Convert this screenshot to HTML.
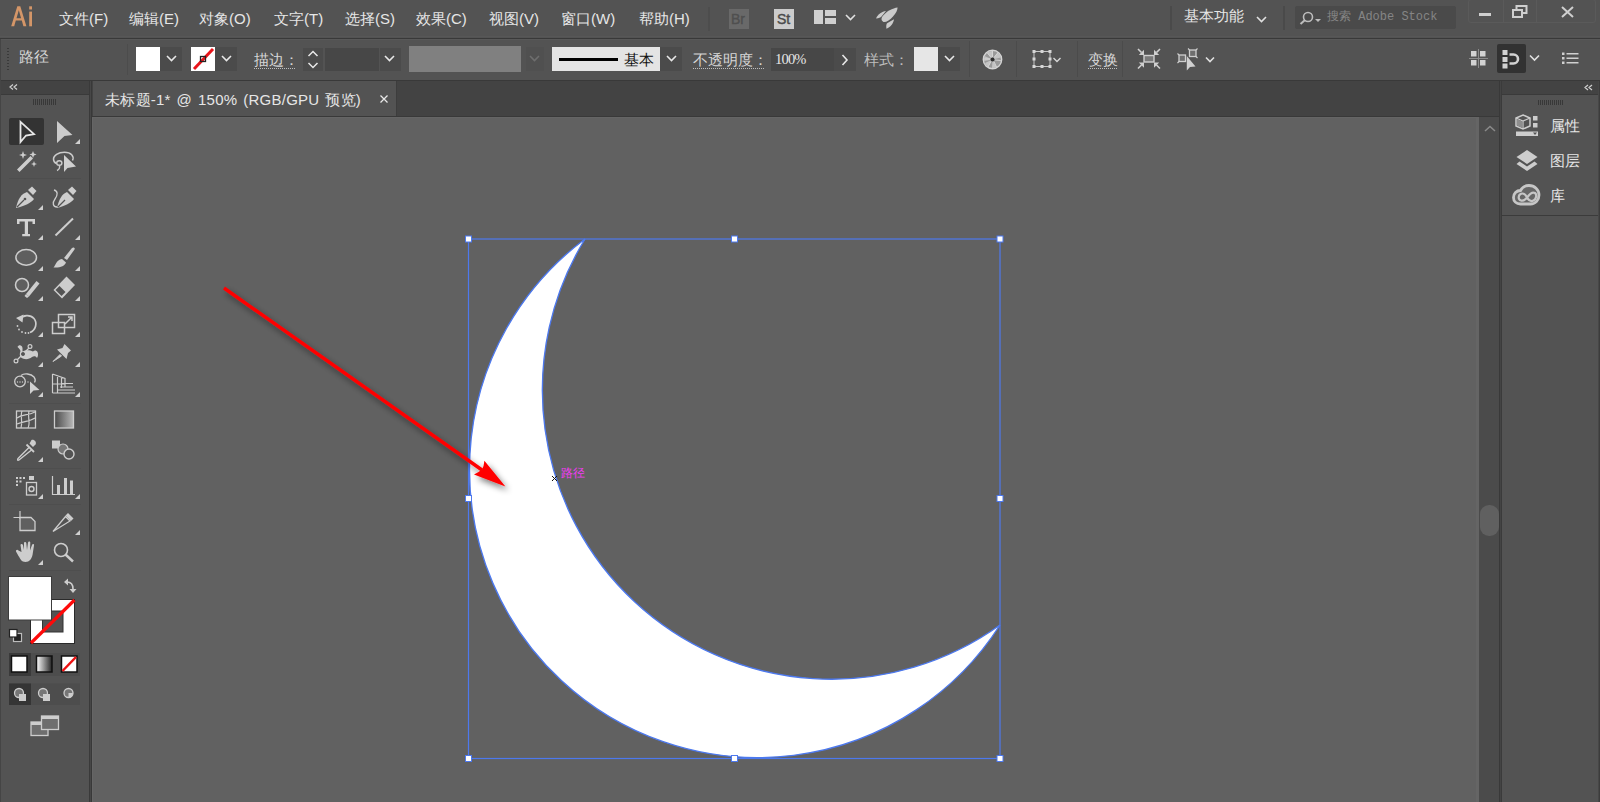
<!DOCTYPE html>
<html><head><meta charset="utf-8">
<style>
*{box-sizing:border-box;margin:0;padding:0}
html,body{width:1600px;height:802px;overflow:hidden;background:#535353;font-family:"Liberation Sans",sans-serif;color:#e0e0e0}
.a{position:absolute}
.t{position:absolute;white-space:nowrap;line-height:1}
.menu{font-size:15px;color:#e6e6e6;top:11px}
.ctl{font-size:15px;color:#d6d6d6;font-family:"Liberation Serif",serif}
.dd{position:absolute;background:#4b4b4b}
.chev{position:absolute}
.sep{position:absolute;width:1px;background:#484848}
.tri{position:absolute;width:0;height:0;border-left:5px solid transparent;border-bottom:5px solid #cfcfcf}
</style></head><body>
<!-- MENU BAR -->
<div class="a" style="left:0;top:0;width:1600px;height:37px;background:#535353"></div>
<div class="a" style="left:0;top:36px;width:1600px;height:1px;background:#575757"></div>
<div class="a" style="left:0;top:38px;width:1600px;height:1px;background:#393939"></div>
<svg class="a" style="left:0;top:0" width="40" height="36"><g fill="#d49668"><path d="M11.2 26.3 L17.3 6.2 L20.3 6.2 L26.4 26.3 L23.4 26.3 L21.8 20.6 L15.8 20.6 L14.2 26.3 Z M16.5 18.2 L21.1 18.2 L18.8 10.3 Z" fill-rule="evenodd"/><rect x="29.2" y="11.6" width="2.8" height="14.7"/><rect x="29.2" y="6.3" width="2.8" height="3.2"/></g></svg>
<div class="t menu" style="left:59px">文件(F)</div>
<div class="t menu" style="left:129px">编辑(E)</div>
<div class="t menu" style="left:199px">对象(O)</div>
<div class="t menu" style="left:274px">文字(T)</div>
<div class="t menu" style="left:345px">选择(S)</div>
<div class="t menu" style="left:416px">效果(C)</div>
<div class="t menu" style="left:489px">视图(V)</div>
<div class="t menu" style="left:561px">窗口(W)</div>
<div class="t menu" style="left:639px">帮助(H)</div>
<div class="sep" style="left:708px;top:7px;height:24px;width:2px;background:#4d4d4d"></div>


<div class="a" style="left:729px;top:9px;width:20px;height:20px;background:#696969"></div>
<div class="t" style="left:731px;top:12px;font-size:14px;color:#4f4f4f;-webkit-text-stroke:0.4px #4f4f4f">Br</div>
<div class="a" style="left:774px;top:9px;width:20px;height:20px;background:#cccccc"></div>
<div class="t" style="left:777px;top:12px;font-size:14px;color:#4a4a4a;-webkit-text-stroke:0.4px #4a4a4a">St</div>
<svg class="a" style="left:814px;top:10px" width="22" height="14"><rect x="0" y="0" width="9" height="14" fill="#cfcfcf"/><rect x="11" y="0" width="11" height="6" fill="#cfcfcf"/><rect x="11" y="8" width="11" height="6" fill="#cfcfcf"/></svg>
<svg class="a" style="left:845px;top:14px" width="11" height="7"><path d="M1 1 L5.5 5.5 L10 1" fill="none" stroke="#e0e0e0" stroke-width="1.6"/></svg>
<svg class="a" style="left:870px;top:2px" width="34" height="32"><g fill="#cbcbcb"><path d="M27.6 5.4 C23 6 16 9 12 15 C11 17 11.5 19 13.5 20 C16 20.5 20 18 23 14.5 C26 11 27.5 8 27.6 5.4 Z"/><path d="M6 16.4 C8 12 12 9.5 16 9 L11.5 14.5 C10.5 15.7 9 16.3 6 16.4 Z"/><path d="M16.4 26.8 C16 23 16.5 21.5 17.5 21 L24 17.2 C23.5 21 21 25 16.4 26.8 Z"/></g></svg>
<div class="a" style="left:1170px;top:6px;width:2px;height:24px;background:#4a4a4a"></div>
<div class="t menu" style="left:1184px;top:8px">基本功能</div>
<svg class="a" style="left:1256px;top:16px" width="11" height="7"><path d="M1 1 L5.5 5.5 L10 1" fill="none" stroke="#e0e0e0" stroke-width="1.6"/></svg>
<div class="a" style="left:1283px;top:6px;width:2px;height:24px;background:#4a4a4a"></div>
<div class="a" style="left:1295px;top:6px;width:161px;height:23px;background:#4a4a4a;border-radius:2px"></div>
<svg class="a" style="left:1299px;top:11px" width="24" height="14"><circle cx="9" cy="6" r="4.5" fill="none" stroke="#bdbdbd" stroke-width="1.6"/><path d="M6 9 L1.5 13" stroke="#bdbdbd" stroke-width="2"/><path d="M16 8 L22 8 L19 11 Z" fill="#bdbdbd"/></svg>
<div class="t" style="left:1327px;top:11px;font-size:12px;color:#858585;font-family:'Liberation Mono',monospace">搜索 Adobe Stock</div>
<div class="a" style="left:1468px;top:-1px;width:128px;height:24px;border:1px solid #5a5a5a;border-radius:3px"></div>
<div class="a" style="left:1503px;top:0;width:1px;height:23px;background:#5a5a5a"></div>
<div class="a" style="left:1536px;top:0;width:1px;height:23px;background:#5a5a5a"></div>
<div class="a" style="left:1479px;top:13px;width:12px;height:3px;background:#cfcfcf"></div>
<svg class="a" style="left:1512px;top:5px" width="16" height="13"><rect x="4.5" y="1" width="10" height="7" fill="none" stroke="#cfcfcf" stroke-width="2"/><rect x="1" y="5" width="9" height="7" fill="#535353" stroke="#cfcfcf" stroke-width="2"/></svg>
<svg class="a" style="left:1561px;top:6px" width="13" height="12"><path d="M1 1 L12 11 M12 1 L1 11" stroke="#cfcfcf" stroke-width="2"/></svg>

<!-- CONTROL BAR -->
<div class="a" style="left:0;top:39px;width:1600px;height:41px;background:#535353"></div>
<div class="a" style="left:0;top:39px;width:1600px;height:1px;background:#585858"></div>
<div class="a" style="left:0;top:80px;width:1600px;height:1px;background:#393939"></div>


<!-- control bar content -->
<div class="a" style="left:7px;top:48px;width:2px;height:23px;background:repeating-linear-gradient(#3a3a3a 0 1px,transparent 1px 3px)"></div>
<div class="t ctl" style="left:19px;top:50px;font-size:15px">路径</div>
<div class="a" style="left:127px;top:44px;width:1px;height:31px;background:#4c4c4c"></div>
<div class="a" style="left:136px;top:47px;width:24px;height:24px;background:#fff"></div>
<div class="dd" style="left:160px;top:47px;width:22px;height:24px"></div>
<svg class="a" style="left:166px;top:55px" width="11" height="7"><path d="M1 1 L5.5 5.5 L10 1" fill="none" stroke="#e8e8e8" stroke-width="1.6"/></svg>
<div class="a" style="left:191px;top:47px;width:24px;height:24px;background:#fff"></div>
<svg class="a" style="left:191px;top:47px" width="24" height="24"><line x1="3" y1="22" x2="22" y2="2" stroke="#e8141a" stroke-width="3"/><rect x="9.5" y="9.5" width="5" height="5" fill="none" stroke="#222" stroke-width="1.3"/></svg>
<div class="dd" style="left:215px;top:47px;width:22px;height:24px"></div>
<svg class="a" style="left:221px;top:55px" width="11" height="7"><path d="M1 1 L5.5 5.5 L10 1" fill="none" stroke="#e8e8e8" stroke-width="1.6"/></svg>
<div class="t ctl" style="left:254px;top:53px">描边：</div>
<div class="a" style="left:254px;top:68px;width:41px;height:1px;background:repeating-linear-gradient(90deg,#bdbdbd 0 1px,transparent 1px 2px)"></div>
<div class="dd" style="left:303px;top:48px;width:20px;height:23px"></div>
<svg class="a" style="left:307px;top:50px" width="12" height="20"><path d="M1.5 6 L6 1.5 L10.5 6 M1.5 13 L6 17.5 L10.5 13" fill="none" stroke="#e8e8e8" stroke-width="1.5"/></svg>
<div class="a" style="left:325px;top:48px;width:54px;height:23px;background:#474747"></div>
<div class="dd" style="left:380px;top:48px;width:21px;height:23px"></div>
<svg class="a" style="left:384px;top:55px" width="11" height="7"><path d="M1 1 L5.5 5.5 L10 1" fill="none" stroke="#e8e8e8" stroke-width="1.6"/></svg>
<div class="a" style="left:409px;top:46px;width:112px;height:26px;background:#808080"></div>
<div class="a" style="left:526px;top:47px;width:18px;height:24px;background:#505050"></div>
<svg class="a" style="left:529px;top:55px" width="11" height="7"><path d="M1 1 L5.5 5.5 L10 1" fill="none" stroke="#6e6e6e" stroke-width="1.6"/></svg>
<div class="a" style="left:552px;top:47px;width:108px;height:24px;background:#e4e4e4"></div>
<div class="a" style="left:559px;top:58px;width:59px;height:3px;background:#000"></div>
<div class="t ctl" style="left:624px;top:53px;color:#111;font-size:14.5px">基本</div>
<div class="dd" style="left:660px;top:47px;width:22px;height:24px"></div>
<svg class="a" style="left:666px;top:55px" width="11" height="7"><path d="M1 1 L5.5 5.5 L10 1" fill="none" stroke="#e8e8e8" stroke-width="1.6"/></svg>
<div class="t ctl" style="left:693px;top:53px">不透明度：</div>
<div class="a" style="left:693px;top:68px;width:71px;height:1px;background:repeating-linear-gradient(90deg,#bdbdbd 0 1px,transparent 1px 2px)"></div>
<div class="a" style="left:771px;top:48px;width:63px;height:23px;background:#474747"></div>
<div class="t ctl" style="left:775px;top:52px;font-size:14.5px;color:#e6e6e6;letter-spacing:-0.8px">100%</div>
<div class="dd" style="left:834px;top:48px;width:22px;height:23px"></div>
<svg class="a" style="left:841px;top:54px" width="8" height="12"><path d="M1.5 1 L6 6 L1.5 11" fill="none" stroke="#e8e8e8" stroke-width="1.6"/></svg>
<div class="t ctl" style="left:864px;top:53px;color:#bdbdbd">样式：</div>
<div class="a" style="left:914px;top:47px;width:24px;height:24px;background:#e6e6e6"></div>
<div class="dd" style="left:938px;top:47px;width:22px;height:24px"></div>
<svg class="a" style="left:944px;top:55px" width="11" height="7"><path d="M1 1 L5.5 5.5 L10 1" fill="none" stroke="#e8e8e8" stroke-width="1.6"/></svg>
<div class="a" style="left:969px;top:41px;width:1px;height:36px;background:#4b4b4b"></div>
<svg class="a" style="left:982px;top:49px" width="21" height="21"><circle cx="10.5" cy="10.5" r="9.2" fill="#9a9a9a" stroke="#d4d4d4" stroke-width="1.4"/><path d="M10.5 10.5 L5 3.5 A8.5 8.5 0 0 1 10.5 2 Z M10.5 10.5 L16 3.5 A8.5 8.5 0 0 1 18.8 8.5 Z M10.5 10.5 L2.2 12 A8.5 8.5 0 0 1 2.5 7 Z M10.5 10.5 L6 18 A8.5 8.5 0 0 1 3 14 Z M10.5 10.5 L14.5 18 A8.5 8.5 0 0 1 10 19 Z" fill="#c4c4c4"/><path d="M10.5 2 V8 M16 3.5 L12 8.5 M18.8 11.5 L13 11 M14.5 18 L12 12.5 M6 18 L9 12.5 M2.2 10 L8 10 M5 3.5 L9 8.5" stroke="#d8d8d8" stroke-width="0.9"/><circle cx="10.5" cy="10.5" r="2" fill="#2e2e2e"/></svg>
<div class="a" style="left:1016px;top:41px;width:1px;height:36px;background:#4b4b4b"></div>
<svg class="a" style="left:1031px;top:49px" width="32" height="20"><rect x="3" y="2.5" width="16" height="15" fill="none" stroke="#c8c8c8" stroke-width="1"/><g fill="#d6d6d6"><rect x="1.5" y="1" width="3" height="3"/><rect x="9.5" y="1" width="3" height="3"/><rect x="17.5" y="1" width="3" height="3"/><rect x="1.5" y="8.5" width="3" height="3"/><rect x="17.5" y="8.5" width="3" height="3"/><rect x="1.5" y="16" width="3" height="3"/><rect x="9.5" y="16" width="3" height="3"/><rect x="17.5" y="16" width="3" height="3"/></g><path d="M22.5 9 L26 12.5 L29.5 9" fill="none" stroke="#d6d6d6" stroke-width="1.4"/></svg>
<div class="a" style="left:1077px;top:41px;width:1px;height:36px;background:#4b4b4b"></div>
<div class="t ctl" style="left:1088px;top:53px">变换</div>
<div class="a" style="left:1088px;top:68px;width:29px;height:1px;background:repeating-linear-gradient(90deg,#bdbdbd 0 1px,transparent 1px 2px)"></div>
<div class="a" style="left:1122px;top:41px;width:1px;height:36px;background:#4b4b4b"></div>
<svg class="a" style="left:1137px;top:48px" width="24" height="22"><rect x="7" y="7.5" width="10" height="6.5" fill="#7a7a7a" stroke="#d0d0d0" stroke-width="1.4"/><g fill="#d0d0d0"><path d="M7 7 L7 1.8 L1.8 7 Z"/><path d="M17 7 L17 1.8 L22.2 7 Z"/><path d="M7 14.5 L7 19.7 L1.8 14.5 Z"/><path d="M17 14.5 L17 19.7 L22.2 14.5 Z"/></g><path d="M1 1 L4.5 4.5 M23 1 L19.5 4.5 M1 20.5 L4.5 17 M23 20.5 L19.5 17" stroke="#d0d0d0" stroke-width="1.6"/></svg>
<svg class="a" style="left:1177px;top:48px" width="40" height="24"><rect x="2" y="7" width="6.5" height="6.5" fill="#6e6e6e" stroke="#cfcfcf" stroke-width="1.3"/><rect x="12.5" y="2" width="6.5" height="6.5" fill="#6e6e6e" stroke="#cfcfcf" stroke-width="1.3"/><path d="M0.5 5.5 L2 7 M0.5 15 L2 13.5 M11 0.5 L12.5 2 M20.5 0.5 L19 2 M20.5 10 L19 8.5" stroke="#cfcfcf" stroke-width="1.1"/><path d="M9.8 8 L9.8 22.5 L13 19 L18.5 18.5 Z" fill="#d0d0d0"/><path d="M29 9.5 L33 13.5 L37 9.5" fill="none" stroke="#e0e0e0" stroke-width="1.6"/></svg>
<svg class="a" style="left:1468px;top:48px" width="21" height="21"><path d="M1 10.5 H20 M10.5 1 V20" stroke="#8a8a8a" stroke-width="1"/><g fill="#d2d2d2"><rect x="3" y="3" width="5.5" height="5.5"/><rect x="12" y="3" width="5.5" height="5.5"/><rect x="3" y="12" width="5.5" height="5.5"/><rect x="12" y="12" width="5.5" height="5.5"/></g></svg>
<div class="a" style="left:1497px;top:44px;width:29px;height:29px;background:#323232;border-radius:2px"></div>
<svg class="a" style="left:1500px;top:48px" width="22" height="22"><g fill="#d2d2d2"><rect x="2.5" y="2" width="5" height="5"/><rect x="2.5" y="9" width="5" height="5"/><rect x="2.5" y="15.5" width="5" height="5"/></g><path d="M9.5 6.5 H13.5 A4.5 4.5 0 0 1 13.5 15.5 H9.5" fill="none" stroke="#d2d2d2" stroke-width="2.6"/></svg>
<svg class="a" style="left:1529px;top:54px" width="11" height="8"><path d="M1 1.5 L5.5 6 L10 1.5" fill="none" stroke="#e0e0e0" stroke-width="1.6"/></svg>
<svg class="a" style="left:1562px;top:52px" width="17" height="13"><rect x="0" y="0.5" width="2.5" height="2.5" fill="#d0d0d0"/><rect x="0" y="5" width="2.5" height="2.5" fill="#d0d0d0"/><rect x="0" y="9.5" width="2.5" height="2.5" fill="#d0d0d0"/><rect x="4.5" y="1" width="12" height="1.5" fill="#d0d0d0"/><rect x="4.5" y="5.5" width="12" height="1.5" fill="#d0d0d0"/><rect x="4.5" y="10" width="12" height="1.5" fill="#d0d0d0"/></svg>

<!-- TAB BAR + PANELS -->
<div class="a" style="left:0;top:81px;width:1600px;height:37px;background:#434343"></div>
<!-- left tool panel -->
<div class="a" style="left:0;top:39px;width:1px;height:763px;background:#454545;z-index:1"></div>
<div class="a" style="left:0;top:81px;width:90px;height:721px;background:#535353"></div>
<div class="a" style="left:0;top:81px;width:90px;height:14px;background:#434343"></div>
<div class="a" style="left:0;top:94px;width:90px;height:1px;background:#3a3a3a"></div>
<div class="a" style="left:89px;top:81px;width:3px;height:721px;background:linear-gradient(90deg,#3a3a3a 0 1px,#474747 1px 2px,#393939 2px 3px)"></div>
<!-- doc tab -->
<div class="a" style="left:93px;top:81px;width:303px;height:35px;background:#535353"></div>
<div class="t" style="left:105px;top:92px;font-size:15px;color:#e6e6e6;letter-spacing:0.25px;word-spacing:1.5px">未标题-1* @ 150% (RGB/GPU 预览)</div>
<svg class="a" style="left:379px;top:94px" width="10" height="10"><path d="M1.5 1.5 L8.5 8.5 M8.5 1.5 L1.5 8.5" stroke="#e8e8e8" stroke-width="1.3"/></svg>
<!-- canvas -->
<div class="a" style="left:92px;top:117px;width:1387px;height:685px;background:#616161"></div>
<div class="a" style="left:92px;top:117px;width:1px;height:685px;background:#666"></div>
<div class="a" style="left:92px;top:116px;width:1407px;height:1px;background:#393939"></div>
<div class="a" style="left:92px;top:117px;width:1387px;height:1px;background:#656565"></div>
<div class="a" style="left:396px;top:81px;width:1px;height:35px;background:#3d3d3d"></div>
<div class="a" style="left:1476px;top:117px;width:3px;height:685px;background:#656565"></div>
<!-- scrollbar -->
<div class="a" style="left:1479px;top:117px;width:20px;height:685px;background:#4b4b4b"></div>
<div class="a" style="left:1480px;top:505px;width:19px;height:31px;background:#606060;border-radius:9px"></div>
<div class="a" style="left:1499px;top:81px;width:3px;height:721px;background:linear-gradient(90deg,#393939 0 1px,#444 1px 2px,#3b3b3b 2px 3px)"></div>
<!-- right panel -->
<div class="a" style="left:1502px;top:81px;width:98px;height:721px;background:#535353"></div>
<div class="a" style="left:1502px;top:81px;width:98px;height:14px;background:#434343"></div>
<div class="a" style="left:1502px;top:94px;width:98px;height:1px;background:#3a3a3a"></div>
<div class="a" style="left:1502px;top:215px;width:98px;height:1px;background:#3b3b3b"></div>
<div class="a" style="left:1598px;top:81px;width:2px;height:721px;background:linear-gradient(90deg,#474747 0 1px,#3c3c3c 1px 2px)"></div>


<!-- LEFT TOOLS -->
<svg class="a" style="left:0;top:0" width="92" height="802">
<g fill="none" stroke="#3f3f3f"><path d="M13 84.5 L10 87 L13 89.5 M17 84.5 L14 87 L17 89.5" stroke="#d0d0d0" stroke-width="1.2"/></g>
<g fill="#383838"><rect x="33" y="99" width="1" height="6"/><rect x="35" y="99" width="1" height="6"/><rect x="37" y="99" width="1" height="6"/><rect x="39" y="99" width="1" height="6"/><rect x="41" y="99" width="1" height="6"/><rect x="43" y="99" width="1" height="6"/><rect x="45" y="99" width="1" height="6"/><rect x="47" y="99" width="1" height="6"/><rect x="49" y="99" width="1" height="6"/><rect x="51" y="99" width="1" height="6"/><rect x="53" y="99" width="1" height="6"/><rect x="55" y="99" width="1" height="6"/></g>
<rect x="9" y="118" width="35" height="27" rx="2" fill="#333"/>
<path d="M20.5 121.8 L34 134.2 L26 135.5 L20.5 142 Z" fill="none" stroke="#e6e6e6" stroke-width="1.8" stroke-linejoin="miter"/>
<path d="M57 121 L72.5 135 L64.5 136 L57 143 Z" fill="#cbcbcb"/>
<g fill="#cfcfcf">
<path d="M80 139 L80 144 L75 144 Z"/>
<path d="M43 205 L43 210 L38 210 Z"/>
<path d="M43 235 L43 240 L38 240 Z"/><path d="M80 235 L80 240 L75 240 Z"/>
<path d="M43 266 L43 271 L38 271 Z"/><path d="M80 266 L80 271 L75 271 Z"/>
<path d="M43 296 L43 301 L38 301 Z"/><path d="M80 296 L80 301 L75 301 Z"/>
<path d="M43 332 L43 337 L38 337 Z"/><path d="M80 332 L80 337 L75 337 Z"/>
<path d="M43 362 L43 367 L38 367 Z"/><path d="M80 362 L80 367 L75 367 Z"/>
<path d="M43 392 L43 397 L38 397 Z"/><path d="M80 392 L80 397 L75 397 Z"/>
<path d="M43 457 L43 462 L38 462 Z"/>
<path d="M43 494 L43 499 L38 499 Z"/><path d="M80 494 L80 499 L75 499 Z"/>
<path d="M80 530 L80 535 L75 535 Z"/>
<path d="M43 560 L43 565 L38 565 Z"/>
</g>
<g stroke="#4e4e4e" stroke-width="1"><path d="M9 178.5 H81 M9 403.5 H81 M9 468.5 H81 M9 504.5 H81 M9 570.5 H81"/></g>
<!-- wand -->
<g fill="#cdcdcd"><path d="M17 169.5 L30.5 156 L33 158.5 L19.5 172 Z"/>
<path d="M23 151 L24 154 L27 155 L24 156 L23 159 L22 156 L19 155 L22 154 Z"/>
<path d="M33 151 L34 153.5 L36.5 154.5 L34 155.5 L33 158 L32 155.5 L29.5 154.5 L32 153.5 Z"/>
<path d="M34 161 L34.8 163.2 L37 164 L34.8 164.8 L34 167 L33.2 164.8 L31 164 L33.2 163.2 Z"/></g>
<!-- lasso -->
<path d="M72.5 160.5 C74.5 156 71 152.3 64.5 152.3 C58 152.3 53.5 155.5 53.5 159 C53.5 161.5 55 163 56.5 163.5" fill="none" stroke="#cdcdcd" stroke-width="1.5"/>
<ellipse cx="59.3" cy="163" rx="2.6" ry="2.2" fill="none" stroke="#cdcdcd" stroke-width="1.4"/>
<path d="M59.5 165.5 C60 168 59.5 169.5 57 170.5" fill="none" stroke="#cdcdcd" stroke-width="1.4"/>
<path d="M64 155 L76 166.5 L67.5 168 L64 172 Z" fill="#d0d0d0"/>
<!-- pen -->
<g fill="#cdcdcd"><path d="M28 190 L32 186.5 L36.5 191 L33 195 Z"/><path d="M27 192 L34 199 C31 203 25 206 16 208 C18 199 21 194 27 192 Z"/></g>
<path d="M17 207 L24 200" stroke="#535353" stroke-width="1.2"/><circle cx="25" cy="199" r="1.3" fill="#535353"/>
<!-- curvature pen -->
<g fill="#cdcdcd"><path d="M68 190 L72 186.5 L76.5 191 L73 195 Z"/><path d="M67 192 L74 199 C71 203 65 206 57 208 C59 199 62 194 67 192 Z"/></g>
<path d="M58 207 L65 200" stroke="#535353" stroke-width="1.2"/>
<path d="M54 190 C58 191 58 195 55 199 C52 203 53 207 57 207" fill="none" stroke="#cdcdcd" stroke-width="1.3"/>
<!-- T -->
<path d="M17 219 H35 V224 H32.5 V221.5 H28 V234 H30 V236.2 H22.2 V234 H24.8 V221.5 H19.5 V224 H17 Z" fill="#d2d2d2"/>
<!-- line -->
<path d="M55.5 235.5 L73 218.5" stroke="#cdcdcd" stroke-width="2"/>
<!-- ellipse -->
<ellipse cx="26.2" cy="257.4" rx="10.3" ry="7.8" fill="#5f5f5f" stroke="#cdcdcd" stroke-width="1.5"/>
<!-- brush -->
<g fill="#cdcdcd"><path d="M64 258 L72 248 C73.5 246.5 75.5 248 74.5 249.5 L67 260 Z"/><path d="M62 259 L66 262.5 C65 266 60 268 53.5 267.5 C56 265 56 260 62 259 Z"/></g>
<!-- shaper -->
<circle cx="22" cy="285" r="6.5" fill="#5f5f5f" stroke="#cdcdcd" stroke-width="1.5"/>
<g fill="#cdcdcd"><path d="M26 294 L36.5 281 L39.5 283.5 L29 296.5 Z"/><path d="M24.5 296 L26 294 L29 296.5 L27 298 Z"/></g>
<!-- eraser -->
<path d="M53.5 290 L66.5 276.5 L75 285 L62 298.5 Z" fill="#cdcdcd"/>
<path d="M55.5 290 L59.5 286 L65.5 292 L61.5 296 Z" fill="#535353"/>
<!-- rotate -->
<path d="M20 319 C23 315 30 314 34 318.5 C37.5 323 36 330 30 332.5" fill="none" stroke="#cdcdcd" stroke-width="1.7"/>
<path d="M16 318 L23.5 314.5 L22.5 322.5 Z" fill="#cdcdcd"/>
<g fill="#cdcdcd"><circle cx="17.5" cy="326" r="0.9"/><circle cx="19" cy="329.5" r="0.9"/><circle cx="22" cy="332" r="0.9"/><circle cx="25.5" cy="333" r="0.9"/><circle cx="28.5" cy="333" r="0.9"/></g>
<!-- scale -->
<g fill="none" stroke="#cdcdcd" stroke-width="1.5"><rect x="58.5" y="314.5" width="16" height="13"/><rect x="52.5" y="322.5" width="12" height="11"/><path d="M65 324 L72 317 M68 317 L72 317 L72 321"/></g>
<!-- puppet / width -->
<path d="M17.5 347 C18.5 344.5 22 344.5 22.5 348 L22.5 351.5 C26 349.5 30 350 33 351.5 C34.5 350 36.5 350 37.5 352 C38.5 354 38 356.5 37 358 C36 356 34 355.5 32 357 C29 359.5 24.5 360 21 357.5 C19.5 356 19.5 353 20.5 351 C20 349 18.5 348 17.5 347 Z" fill="#cdcdcd"/>
<path d="M16 361 L30 347" stroke="#cdcdcd" stroke-width="1.3"/>
<circle cx="16" cy="361" r="1.9" fill="#535353" stroke="#cdcdcd" stroke-width="1.2"/><circle cx="30" cy="346.5" r="1.9" fill="#535353" stroke="#cdcdcd" stroke-width="1.2"/><circle cx="23" cy="354" r="1.6" fill="#535353" stroke="#535353" stroke-width="0.8"/>
<!-- pin -->
<path d="M64.5 344 L71 350.5 L68 353 L66.5 359 L57 349.5 L62.5 348 Z" fill="#cdcdcd"/>
<path d="M53 361.5 L60 354.5 L61.5 356 Z" fill="#cdcdcd" stroke="#cdcdcd" stroke-width="1"/>
<!-- shape builder -->
<circle cx="20" cy="381.5" r="5.3" fill="none" stroke="#cdcdcd" stroke-width="1.3"/><path d="M21 375.5 C24 373 31 373.5 34 377 C35.5 379 35.5 381 34.5 382.5" fill="none" stroke="#cdcdcd" stroke-width="1.3"/>
<g fill="#cdcdcd"><circle cx="17.5" cy="382" r="0.7"/><circle cx="20" cy="382" r="0.7"/><circle cx="22.5" cy="382" r="0.7"/><circle cx="28" cy="382" r="0.7"/></g>
<path d="M30 381.5 L30 394 L33.5 390.5 L39.5 390 Z" fill="#d0d0d0"/>
<!-- perspective grid -->
<g fill="none" stroke="#cdcdcd" stroke-width="1.2"><path d="M52.5 374 V393 M52.5 374 L65 378.5 V386.5 M52.5 384 H65 M57.5 375.5 V393 M61.5 377 V388 M62 383.5 H73 M60 387 H73 M57 390 H75 M52.5 393 H75"/></g>
<!-- mesh -->
<rect x="16.5" y="411" width="19" height="17" fill="none" stroke="#cdcdcd" stroke-width="1.3"/>
<path d="M17 418 C22 414 27 416 35 412 M17 424 C23 421 29 422 35 418 M22 411 C20 416 23 422 21 428 M29 411 C27 417 31 422 28 428" fill="none" stroke="#cdcdcd" stroke-width="1.2"/>
<!-- gradient -->
<defs><linearGradient id="gr" x1="0" x2="1"><stop offset="0" stop-color="#4a4a4a"/><stop offset="1" stop-color="#b8b8b8"/></linearGradient>
<linearGradient id="gr2" x1="0" x2="1"><stop offset="0" stop-color="#ffffff"/><stop offset="1" stop-color="#222"/></linearGradient></defs>
<rect x="54.5" y="411" width="19" height="17" fill="url(#gr)" stroke="#cdcdcd" stroke-width="1.3"/>
<!-- eyedropper -->
<path d="M31.5 440 C34 439 37 442 35.5 444.5 L33 447 L29.5 443.5 Z" fill="#cdcdcd"/>
<path d="M26.5 444.5 L34 452" stroke="#cdcdcd" stroke-width="1.8"/>
<path d="M29 447.5 L18.5 458 C17 459.5 17.5 461 19 460 L31.5 450" fill="none" stroke="#cdcdcd" stroke-width="1.4"/>
<!-- blend -->
<rect x="52" y="440.5" width="8" height="8" fill="#cdcdcd"/>
<circle cx="63" cy="449" r="5" fill="#777" stroke="#cdcdcd" stroke-width="1.2"/>
<circle cx="69" cy="454" r="5" fill="#535353" stroke="#cdcdcd" stroke-width="1.4"/>
<!-- symbol sprayer -->
<g fill="#cdcdcd"><rect x="16" y="477" width="2" height="2"/><rect x="19.5" y="477" width="2" height="2"/><rect x="23" y="477" width="2" height="2"/><rect x="16" y="480.5" width="2" height="2"/><rect x="19.5" y="480.5" width="2" height="2"/><rect x="16" y="484" width="2" height="2"/><rect x="29" y="476" width="5" height="4"/></g>
<rect x="26.5" y="482.5" width="10" height="12.5" fill="none" stroke="#cdcdcd" stroke-width="1.3"/>
<circle cx="31.5" cy="489" r="2.5" fill="none" stroke="#cdcdcd" stroke-width="1.4"/>
<!-- graph -->
<path d="M52.5 476 V494.5 H75" fill="none" stroke="#cdcdcd" stroke-width="1.2"/>
<g fill="#cdcdcd"><rect x="57" y="485" width="3" height="9"/><rect x="64" y="478" width="3" height="16"/><rect x="70" y="480.5" width="3" height="13.5"/></g>
<!-- artboard -->
<path d="M20 511 V519 M13.5 517.5 H21" stroke="#cdcdcd" stroke-width="1.2"/>
<path d="M20 517.5 H31 L35 521.5 V530.5 H20 Z" fill="#606060" stroke="#cdcdcd" stroke-width="1.3"/>
<!-- slice -->
<path d="M68 513 L73.5 518.5 L71 521 L65.5 515.5 Z" fill="#cdcdcd"/>
<path d="M65.5 516.5 L70 521 L53 531.5 Z" fill="none" stroke="#cdcdcd" stroke-width="1.3"/>
<!-- hand -->
<path transform="translate(2.5,0)" d="M19 552 L18 545 C18 543.5 20 543.5 20.5 545 L21.5 550 L21.5 543 C21.5 541.5 23.5 541.5 23.8 543 L24.5 550 L25.5 542.5 C25.8 541 27.8 541 27.8 542.5 L27.5 550.5 L29.5 545 C30 543.5 32 544 31.5 545.5 L30 555 C29 559 27 562 23 562 C19 562 18 559 16 556 L13.5 551.5 C13 550 15 549 16 550.5 Z" fill="#cdcdcd"/>
<!-- zoom -->
<circle cx="61" cy="550" r="6.5" fill="none" stroke="#cdcdcd" stroke-width="1.6"/>
<path d="M65.5 554.5 L73 561.5" stroke="#cdcdcd" stroke-width="2.4"/>
<!-- fill/stroke -->
<rect x="30.5" y="599.5" width="44" height="44" fill="#fff" stroke="#2a2a2a" stroke-width="1"/>
<rect x="42.5" y="611" width="20.5" height="21" fill="#535353" stroke="#333" stroke-width="1"/>
<path d="M31 643 L74.5 600" stroke="#ff0a0a" stroke-width="3.2"/>
<rect x="8.5" y="576.5" width="43" height="43.5" fill="#fff" stroke="#3c3c3c" stroke-width="1"/>
<path d="M67 582 C71 582 73 584 73 589" fill="none" stroke="#cdcdcd" stroke-width="1.6"/><path d="M64 582 L68 578.5 L68 585.5 Z M73 593 L69.5 589 L76.5 589 Z" fill="#cdcdcd"/>
<rect x="13.5" y="633.5" width="8" height="8" fill="#222" stroke="#bdbdbd" stroke-width="1.2"/><rect x="9.5" y="629.5" width="7.5" height="7.5" fill="#fff" stroke="#222" stroke-width="1.2"/>
<!-- color modes -->
<rect x="9" y="653" width="71" height="23" fill="#4d4d4d"/>
<rect x="9" y="653" width="22" height="23" fill="#3a3a3a"/>
<rect x="11.5" y="656" width="15.5" height="16" fill="#fff" stroke="#111" stroke-width="1.5"/>
<rect x="36.5" y="656" width="15.5" height="16" fill="url(#gr2)" stroke="#111" stroke-width="1.5"/>
<rect x="61.5" y="656" width="15.5" height="16" fill="#fff" stroke="#111" stroke-width="1.5"/>
<path d="M62.5 671 L76 657" stroke="#ee1111" stroke-width="2.5"/>
<!-- draw modes -->
<rect x="9" y="683.5" width="71" height="21.5" fill="#4d4d4d"/>
<rect x="9" y="683.5" width="22" height="21.5" fill="#353535"/>
<g fill="#767676" stroke="#cdcdcd" stroke-width="1.3"><circle cx="19" cy="693" r="4.5"/><circle cx="43" cy="693" r="4.5"/><circle cx="68.5" cy="693" r="4.5"/></g>
<rect x="19" y="694" width="7" height="7" fill="#cdcdcd"/><rect x="43" y="694" width="7" height="7" fill="#cdcdcd"/>
<path d="M68.5 693 H73 A4.5 4.5 0 0 1 68.5 697.5 Z" fill="#cdcdcd"/>
<!-- screen mode -->
<rect x="31" y="722" width="17" height="13.5" fill="#6e6e6e" stroke="#cdcdcd" stroke-width="1.3"/><rect x="31" y="722" width="17" height="3" fill="#cdcdcd"/>
<rect x="41.5" y="716" width="17" height="13.5" fill="#6e6e6e" stroke="#cdcdcd" stroke-width="1.3"/>
<rect x="41.5" y="716" width="17" height="3" fill="#cdcdcd"/>
</svg>

<!-- RIGHT PANEL -->
<svg class="a" style="left:1500px;top:0" width="100" height="802">
<path d="M88 85 L85 87.5 L88 90 M92 85 L89 87.5 L92 90" fill="none" stroke="#d0d0d0" stroke-width="1.2"/>
<g fill="#383838"><rect x="38" y="100" width="1" height="5"/><rect x="40" y="100" width="1" height="5"/><rect x="42" y="100" width="1" height="5"/><rect x="44" y="100" width="1" height="5"/><rect x="46" y="100" width="1" height="5"/><rect x="48" y="100" width="1" height="5"/><rect x="50" y="100" width="1" height="5"/><rect x="52" y="100" width="1" height="5"/><rect x="54" y="100" width="1" height="5"/><rect x="56" y="100" width="1" height="5"/><rect x="58" y="100" width="1" height="5"/><rect x="60" y="100" width="1" height="5"/><rect x="62" y="100" width="1" height="5"/></g>
<!-- properties icon -->
<path d="M23 115 L30 118 L30 126 L23 129 L16 126 L16 118 Z" fill="none" stroke="#cdcdcd" stroke-width="1.5"/>
<path d="M16 118 L23 121 L30 118 M23 121 V129" fill="none" stroke="#cdcdcd" stroke-width="1.2"/>
<path d="M17 119 L22.5 121.5 V128 L17 125.5 Z" fill="#8e8e8e"/>
<rect x="33" y="116" width="4.5" height="4.5" fill="#cdcdcd"/><rect x="33" y="123" width="4.5" height="4.5" fill="#cdcdcd"/>
<rect x="16" y="131.5" width="22" height="4.5" fill="#cdcdcd"/><path d="M33 132.5 L37 132.5 L35 135 Z" fill="#535353"/>
<!-- layers icon -->
<path d="M27 150 L37.5 157 L27 164 L16.5 157 Z" fill="#cdcdcd"/>
<path d="M19.5 161.5 L27 166.5 L34.5 161.5 L37.5 164 L27 171 L16.5 164 Z" fill="#cdcdcd"/>
<!-- CC icon -->
<path d="M20.5 204 C16 204 13.5 201 13.5 197.5 C13.5 193.5 16.5 190.5 20.5 190.5 C22 187.5 25.5 185.5 29 185.5 C34.5 185.5 39 189.5 39 195 C39 200 35.5 204 30.5 204 Z" fill="#666" stroke="#c6c6c6" stroke-width="2.8"/>
<path d="M26.5 196.5 C25 193.5 22 193 20.5 194 C18 195.5 18 199.5 21 200.5 C23.5 201.5 25.5 199.5 27.5 197 C30 193.5 32.5 191.5 35 193 C37 194.5 36.5 199 33.5 200.5 C31.5 201.5 29 200.5 27.5 198.5" fill="none" stroke="#c6c6c6" stroke-width="2.2"/>
</svg>
<div class="t" style="left:1550px;top:118px;font-size:15px;color:#e6e6e6">属性</div>
<div class="t" style="left:1550px;top:153px;font-size:15px;color:#e6e6e6">图层</div>
<div class="t" style="left:1550px;top:188px;font-size:15px;color:#e6e6e6">库</div>
<svg class="a" style="left:1484px;top:125px" width="12" height="7"><path d="M1 6 L6 1.5 L11 6" fill="none" stroke="#8a8a8a" stroke-width="1.5"/></svg>

<!-- MOON -->
<svg class="a" style="left:0;top:0" width="1600" height="802">
<path d="M585 239 A288 288 0 1 0 1000 625 A289.1 289.1 0 0 1 585 239 Z" fill="#fff" stroke="#4d79ee" stroke-width="1.35"/>
<rect x="468.5" y="239" width="531.5" height="519.5" fill="none" stroke="#4d79ee" stroke-width="1.2"/>
</svg>

<!-- CANVAS OBJECTS -->
<svg class="a" style="left:0;top:0" width="1600" height="802">
<defs><filter id="sh" x="-20%" y="-20%" width="140%" height="140%"><feGaussianBlur in="SourceAlpha" stdDeviation="3"/><feOffset dx="3" dy="4" result="b"/><feComponentTransfer><feFuncA type="linear" slope="0.5"/></feComponentTransfer><feMerge><feMergeNode/><feMergeNode in="SourceGraphic"/></feMerge></filter></defs>
<g fill="#fff" stroke="#4d79ee" stroke-width="1">
<rect x="465.5" y="236" width="6" height="6"/><rect x="731.5" y="236" width="6" height="6"/><rect x="997" y="236" width="6" height="6"/>
<rect x="465.5" y="495.5" width="6" height="6"/><rect x="997" y="495.5" width="6" height="6"/>
<rect x="465.5" y="755.5" width="6" height="6"/><rect x="731.5" y="755.5" width="6" height="6"/><rect x="997" y="755.5" width="6" height="6"/>
</g>
<g filter="url(#sh)">
<path d="M224 288 L482 470" stroke="#ff0000" stroke-width="3.4"/>
<path d="M505.4 486.5 L484.4 460.7 Q484 466 482 469.5 Q478.5 472.5 474 474.4 Z" fill="#ff0000"/>
</g>
<path d="M552 476 L557 481 M557 476 L552 481" stroke="#111" stroke-width="1"/>
</svg>
<div class="t" style="left:561px;top:467px;font-size:12px;color:#f23cf2">路径</div>
</body></html>
